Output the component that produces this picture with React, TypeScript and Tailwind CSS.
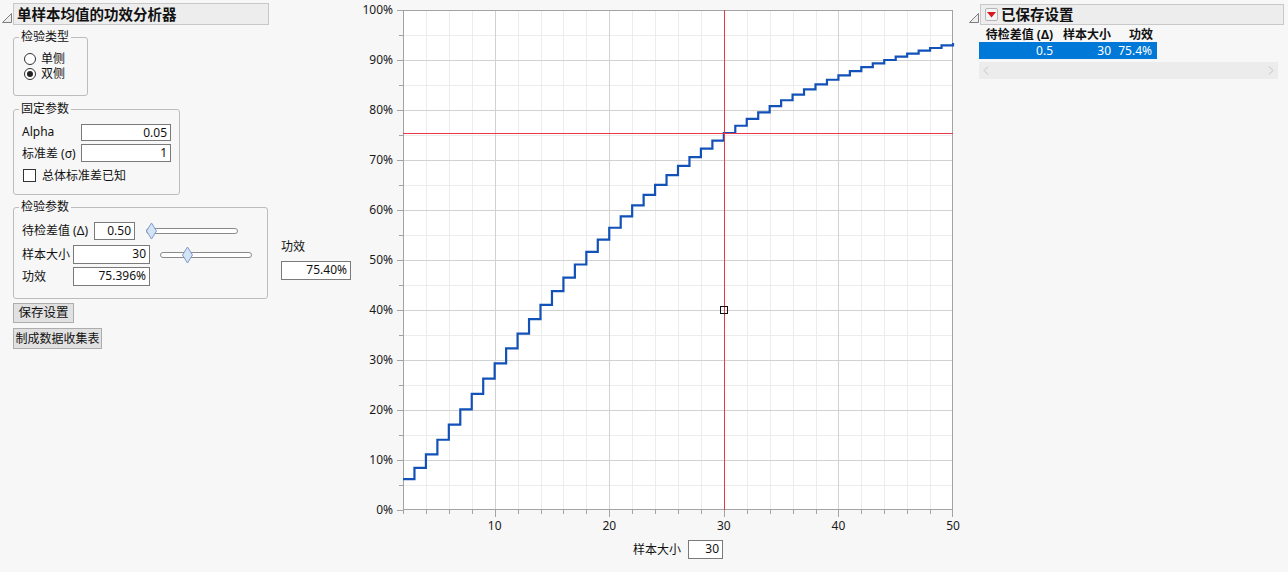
import React from "react";

// --- power of one-sample two-sided t test (noncentral t by integration over chi) ---
function erf(x: number) {
  const t = 1 / (1 + 0.3275911 * Math.abs(x));
  const y = 1 - ((((1.061405429 * t - 1.453152027) * t + 1.421413741) * t - 0.284496736) * t + 0.254829592) * t * Math.exp(-x * x);
  return x >= 0 ? y : -y;
}
const Phi = (x: number) => 0.5 * (1 + erf(x / Math.SQRT2));

function lgamma(z: number): number {
  const c = [0.99999999999980993, 676.5203681218851, -1259.1392167224028, 771.32342877765313, -176.61502916214059, 12.507343278686905, -0.13857109526572012, 9.9843695780195716e-6, 1.5056327351493116e-7];
  if (z < 0.5) return Math.log(Math.PI / Math.sin(Math.PI * z)) - lgamma(1 - z);
  z -= 1;
  let x = c[0];
  for (let i = 1; i < 9; i++) x += c[i] / (z + i);
  const t = z + 7.5;
  return 0.5 * Math.log(2 * Math.PI) + (z + 0.5) * Math.log(t) - t + Math.log(x);
}

function integrate(k: number, fn: (u: number) => number) {
  const a = 1e-9;
  const b = Math.sqrt(k) + 10;
  const N = 600;
  const h = (b - a) / N;
  const lc = (1 - k / 2) * Math.LN2 - lgamma(k / 2);
  let s = 0;
  for (let i = 0; i <= N; i++) {
    const u = a + i * h;
    const w = i === 0 || i === N ? 1 : i % 2 ? 4 : 2;
    s += w * fn(u) * Math.exp(lc + (k - 1) * Math.log(u) - (u * u) / 2);
  }
  return (s * h) / 3;
}

function power(n: number) {
  const df = n - 1;
  const sq = Math.sqrt(df);
  let lo = 0;
  let hi = 200;
  for (let i = 0; i < 50; i++) {
    const mid = (lo + hi) / 2;
    const p = integrate(df, (u) => 2 * Phi((-mid * u) / sq));
    if (p > 0.05) lo = mid;
    else hi = mid;
  }
  const tc = (lo + hi) / 2;
  const ncp = 0.5 * Math.sqrt(n);
  return integrate(df, (u) => Phi(ncp - (tc * u) / sq) + Phi(-ncp - (tc * u) / sq));
}

const NS = Array.from({ length: 49 }, (_, i) => i + 2);
const POWERS = NS.map(power);

const xs = (n: number) => 48 + ((n - 2) * 550) / 48;
const ys = (p: number) => 10 + (1 - p) * 500;
const px = (v: number) => Math.round(v) + 0.5;

function Chart() {
  let d = "";
  NS.forEach((n, i) => {
    const y = ys(POWERS[i]).toFixed(2);
    if (i === 0) d += `M${xs(n)} ${y}`;
    else d += ` V${y}`;
    if (n < 50) d += ` H${xs(n + 1).toFixed(2)}`;
  });
  const minorX = NS.filter((n) => n % 2 === 0 && n % 10 !== 0 && n !== 2 && n !== 50);
  const majorX = [10, 20, 30, 40];
  const majorY = [10, 20, 30, 40, 50, 60, 70, 80, 90];
  const minorY = [5, 15, 25, 35, 45, 55, 65, 75, 85, 95];
  return (
    <svg width={605} height={535} className="block">
      <rect x={48} y={10} width={550} height={500} fill="#ffffff" />
      {minorX.map((n) => (
        <line key={"mx" + n} x1={px(xs(n))} x2={px(xs(n))} y1={10} y2={510} stroke="#ececec" />
      ))}
      {minorY.map((v) => (
        <line key={"my" + v} x1={48} x2={598} y1={px(ys(v / 100))} y2={px(ys(v / 100))} stroke="#ececec" />
      ))}
      {majorX.map((n) => (
        <line key={"Mx" + n} x1={px(xs(n))} x2={px(xs(n))} y1={10} y2={510} stroke="#d2d2d2" />
      ))}
      {majorY.map((v) => (
        <line key={"My" + v} x1={48} x2={598} y1={px(ys(v / 100))} y2={px(ys(v / 100))} stroke="#d2d2d2" />
      ))}
      <rect x={48.5} y={10.5} width={549} height={499} fill="none" stroke="#a3a3a3" />
      {/* left ticks */}
      {[0, ...majorY, 100].map((v) => (
        <line key={"lt" + v} x1={42} x2={48} y1={px(ys(v / 100))} y2={px(ys(v / 100))} stroke="#a3a3a3" />
      ))}
      {minorY.map((v) => (
        <line key={"lmt" + v} x1={44} x2={48} y1={px(ys(v / 100))} y2={px(ys(v / 100))} stroke="#a3a3a3" />
      ))}
      {/* bottom ticks */}
      {[10, 20, 30, 40, 50].map((n) => (
        <line key={"bt" + n} x1={px(xs(n)) - (n === 50 ? 1 : 0)} x2={px(xs(n)) - (n === 50 ? 1 : 0)} y1={510} y2={517} stroke="#a3a3a3" />
      ))}
      {[2, ...minorX].map((n) => (
        <line key={"bmt" + n} x1={px(xs(n))} x2={px(xs(n))} y1={510} y2={514} stroke="#a3a3a3" />
      ))}
      {[0, 10, 20, 30, 40, 50, 60, 70, 80, 90, 100].map((v) => (
        <text key={"yl" + v} x={38} y={ys(v / 100) + 4} textAnchor="end" fontSize={12} fill="#1a1a1a" fontFamily="Noto Sans, sans-serif">
          {v}%
        </text>
      ))}
      {[10, 20, 30, 40, 50].map((n) => (
        <text key={"xl" + n} x={xs(n)} y={530} textAnchor="middle" fontSize={12} fill="#1a1a1a" fontFamily="Noto Sans, sans-serif">
          {n}
        </text>
      ))}
      <path d={d} fill="none" stroke="#1252b8" strokeWidth={2.2} strokeLinejoin="miter" />
      <line x1={48} x2={598} y1={px(ys(0.75396))} y2={px(ys(0.75396))} stroke="#e8374a" />
      <line x1={px(xs(30))} x2={px(xs(30))} y1={10} y2={510} stroke="#e8374a" />
      <rect x={px(xs(30)) - 4} y={px(ys(0.4)) - 4} width={7} height={7} fill="none" stroke="#111" />
    </svg>
  );
}

function Slider({ width, thumb }: { width: number; thumb: number }) {
  return (
    <svg width={width} height={18} className="block shrink-0">
      <rect x={0.5} y={6.5} width={width - 1} height={5} rx={2.5} fill="#fff" stroke="#8a8a8a" />
      <polygon points={`${thumb},1 ${thumb + 5},9 ${thumb},17 ${thumb - 5},9`} fill="#d4e3f6" stroke="#7e9cc6" />
    </svg>
  );
}

function Box({ value, className }: { value: string; className: string }) {
  return (
    <div className={`border border-[#7a7a7a] bg-white text-right pr-[3px] leading-[15px] text-[12px] ${className}`}>
      {value}
    </div>
  );
}

function Disclosure() {
  return (
    <svg width={10} height={10} className="block shrink-0">
      <polygon points="9.5,0.5 9.5,9.5 0.5,9.5" fill="#eeeeee" stroke="#7d7d7d" />
    </svg>
  );
}

export default function App() {
  return (
    <div className="w-[1288px] h-[572px] bg-[#f7f7f7] flex text-[#111] text-[12px] font-['Noto_Sans','Noto_Sans_CJK_SC',sans-serif] overflow-hidden">
      {/* left panel */}
      <div className="w-[355px] shrink-0">
        <div className="flex items-center pt-[3px] pl-[2px]">
          <div className="mt-[7px] mr-[1px]">
            <Disclosure />
          </div>
          <div className="w-[256px] h-[22px] border border-[#c8c8c8] bg-[#ededed] pl-[3px] font-bold text-[14.5px] leading-[20px]">
            单样本均值的功效分析器
          </div>
        </div>

        <div className="pl-[13px]">
          <fieldset className="mt-[4px] w-[75px] h-[67px] border border-[#bcbcbc] rounded-[3px]">
            <legend className="ml-[5px] px-[2px] leading-[16px]">检验类型</legend>
            <div className="pt-[6px] pl-[10px]">
              <div className="flex items-center h-[15px]">
                <div className="w-[12px] h-[12px] rounded-full border border-[#333] bg-white" />
                <span className="ml-[5px] leading-[15px]">单侧</span>
              </div>
              <div className="flex items-center h-[15px]">
                <div className="w-[12px] h-[12px] rounded-full border border-[#333] bg-white flex items-center justify-center">
                  <div className="w-[6px] h-[6px] rounded-full bg-[#222]" />
                </div>
                <span className="ml-[5px] leading-[15px]">双侧</span>
              </div>
            </div>
          </fieldset>

          <fieldset className="mt-[5px] w-[167px] h-[94px] border border-[#bcbcbc] rounded-[3px]">
            <legend className="ml-[5px] px-[2px] leading-[16px]">固定参数</legend>
            <div className="pt-[7px] pl-[8px]">
              <div className="flex items-center">
                <span className="w-[59px] leading-[17px] -mt-[3px]">Alpha</span>
                <Box value="0.05" className="w-[90px] h-[17px]" />
              </div>
              <div className="flex items-center mt-[3px]">
                <span className="w-[59px] leading-[17px]">标准差 (σ)</span>
                <Box value="1" className="w-[90px] h-[18px]" />
              </div>
              <div className="flex items-center mt-[7px] pl-[1px]">
                <div className="w-[13px] h-[13px] border border-[#333] bg-white" />
                <span className="ml-[6px] leading-[13px]">总体标准差已知</span>
              </div>
            </div>
          </fieldset>

          <div className="flex items-start mt-[4px]">
            <fieldset className="w-[255px] h-[100px] border border-[#bcbcbc] rounded-[3px] shrink-0">
              <legend className="ml-[5px] px-[2px] leading-[16px]">检验参数</legend>
              <div className="pt-[7px] pl-[8px]">
                <div className="flex items-center h-[18px]">
                  <span className="w-[72px]">待检差值 (Δ)</span>
                  <Box value="0.50" className="w-[41px] h-[18px]" />
                  <div className="ml-[11px]">
                    <Slider width={92} thumb={5.5} />
                  </div>
                </div>
                <div className="flex items-center h-[19px] mt-[5px]">
                  <span className="w-[51px]">样本大小</span>
                  <Box value="30" className="w-[77px] h-[19px]" />
                  <div className="ml-[10px]">
                    <Slider width={92} thumb={27.5} />
                  </div>
                </div>
                <div className="flex items-center h-[19px] mt-[3px]">
                  <span className="w-[51px]">功效</span>
                  <Box value="75.396%" className="w-[77px] h-[19px]" />
                </div>
              </div>
            </fieldset>
            <div className="ml-[13px] mt-[40px]">
              <div className="leading-[16px]">功效</div>
              <Box value="75.40%" className="mt-[6px] w-[70px] h-[19px]" />
            </div>
          </div>

          <button className="block mt-[4px] w-[61px] h-[20px] bg-[#e1e1e1] border border-[#adadad] text-[12.5px] leading-[18px]">
            保存设置
          </button>
          <button className="block mt-[5px] w-[89px] h-[21px] bg-[#e1e1e1] border border-[#adadad] text-[12px] leading-[19px]">
            制成数据收集表
          </button>
        </div>
      </div>

      {/* chart */}
      <div className="w-[605px] shrink-0">
        <Chart />
        <div className="ml-[48px] w-[550px] flex justify-center items-center mt-[5px]">
          <span className="leading-[19px]">样本大小</span>
          <Box value="30" className="ml-[7px] w-[35px] h-[19px]" />
        </div>
      </div>

      {/* right panel */}
      <div className="flex-1 pl-[9px]">
        <div className="flex items-center pt-[4px]">
          <div className="mt-[6px] mr-[1px]">
            <Disclosure />
          </div>
          <div className="w-[304px] h-[21px] border border-[#c8c8c8] bg-[#ededed] flex items-center pl-[4px]">
            <div className="w-[13px] h-[13px] rounded-[2px] border border-[#b5b5b5] bg-[#f4f4f4] flex items-center justify-center">
              <svg width={9} height={6} className="block">
                <polygon points="0,0 9,0 4.5,5.5" fill="#d71920" />
              </svg>
            </div>
            <span className="ml-[3px] font-bold text-[14.5px] leading-[19px]">已保存设置</span>
          </div>
        </div>
        <div className="ml-[10px] mt-[2px]">
          <div className="flex font-bold h-[15px] leading-[15px]">
            <div className="w-[76px] text-right pr-[2px]">待检差值 (Δ)</div>
            <div className="w-[58px] text-right pr-[2px]">样本大小</div>
            <div className="w-[44px] text-right pr-[4px]">功效</div>
          </div>
          <div className="flex h-[17px] leading-[17px] bg-[#0078d7] text-white w-[178px]">
            <div className="w-[76px] text-right pr-[2px]">0.5</div>
            <div className="w-[58px] text-right pr-[2px]">30</div>
            <div className="w-[44px] text-right pr-[5px]">75.4%</div>
          </div>
          <div className="mt-[3px] w-[299px] h-[17px] bg-[#ececec] flex items-center justify-between px-[4px]">
            <svg width={6} height={9} className="block">
              <polyline points="5,0.5 1,4.5 5,8.5" fill="none" stroke="#c4c4c4" />
            </svg>
            <svg width={6} height={9} className="block">
              <polyline points="1,0.5 5,4.5 1,8.5" fill="none" stroke="#c4c4c4" />
            </svg>
          </div>
        </div>
      </div>
    </div>
  );
}
